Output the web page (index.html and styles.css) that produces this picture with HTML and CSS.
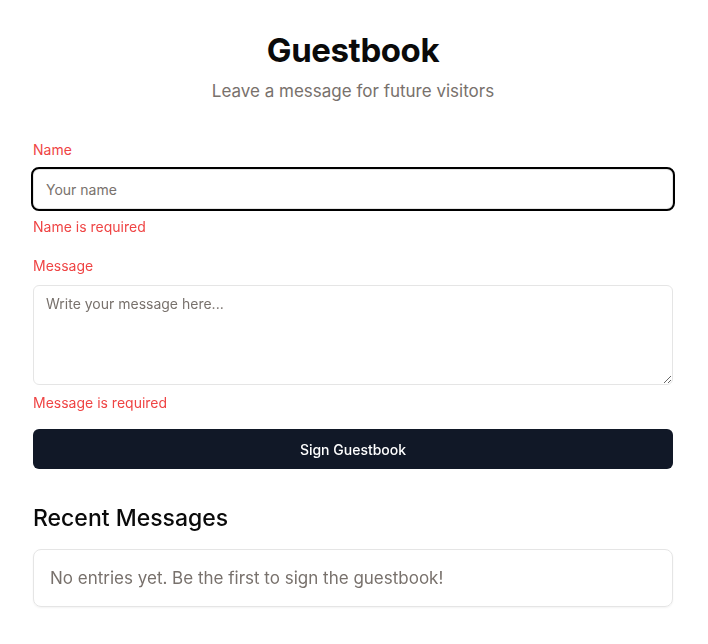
FILE: index.html
```html
<!DOCTYPE html>
<html lang="en">
<head>
<meta charset="utf-8">
<title>Guestbook</title>
<link rel="stylesheet" href="styles.css">
</head>
<body>
<main class="page">
  <header class="header">
    <h1 class="title">Guestbook</h1>
    <p class="subtitle">Leave a message for future visitors</p>
  </header>
  <form class="form">
    <div class="field">
      <label class="label" for="name">Name</label>
      <input class="input input-focus" id="name" type="text" placeholder="Your name">
      <p class="error">Name is required</p>
    </div>
    <div class="field">
      <label class="label" for="message">Message</label>
      <textarea class="input textarea" id="message" placeholder="Write your message here..."></textarea>
      <p class="error">Message is required</p>
    </div>
    <button class="button" type="button">Sign Guestbook</button>
  </form>
  <section class="recent">
    <h2 class="recent-title">Recent Messages</h2>
    <div class="card">No entries yet. Be the first to sign the guestbook!</div>
  </section>
</main>
<script>document.getElementById('name').focus();</script>
</body>
</html>
```

FILE: styles.css
```css
* { box-sizing: border-box; }
html, body { margin: 0; padding: 0; background: #fff; }
body {
  font-family: Inter, "Noto Sans", "Liberation Sans", sans-serif;
  color: #0a0a0a;
  padding-right: 2px;
}
.page {
  max-width: 640px;
  margin: 0 auto;
  padding: 32px 0 32px;
}
.header { text-align: center; }
.title {
  margin: 0;
  font-size: 33px;
  line-height: 36px;
  font-weight: 700;
  letter-spacing: -0.4px;
  color: #0a0a0a;
}
.subtitle {
  margin: 11px 0 0;
  font-size: 17px;
  line-height: 24px;
  color: #78716c;
}
.form { margin-top: 37px; display: flex; flex-direction: column; }
.field { display: flex; flex-direction: column; margin-bottom: 19px; }
.label {
  font-size: 14px;
  line-height: 20px;
  font-weight: 400;
  color: #ef4444;
  margin-bottom: 9px;
}
.input {
  width: 100%;
  height: 40px;
  border: 1px solid #e5e5e5;
  border-radius: 6px;
  padding: 8px 12px;
  font-family: inherit;
  font-size: 14px;
  line-height: 20px;
  color: #0a0a0a;
  background: #fff;
  outline: none;
}
.input::placeholder { color: #78716c; }
.input-focus:focus { outline: 2px solid #000; outline-offset: 0; }
.textarea { height: 100px; resize: vertical; display: block; }
.error {
  margin: 8px 0 0;
  font-size: 14px;
  line-height: 20px;
  color: #ef4444;
}
.field + .button { margin-top: -3px; }
.button {
  height: 40px;
  border: none;
  border-radius: 6px;
  background: #111827;
  color: #fff;
  font-family: inherit;
  font-size: 14px;
  font-weight: 500;
  cursor: pointer;
}
.recent { margin-top: 35px; }
.recent-title {
  margin: 0 0 17px;
  font-size: 23px;
  line-height: 28px;
  font-weight: 500;
  color: #0a0a0a;
}
.card {
  border: 1px solid #e5e5e5;
  border-radius: 8px;
  padding: 16px;
  font-size: 17px;
  line-height: 24px;
  color: #78716c;
  box-shadow: 0 1px 2px rgba(0,0,0,0.05);
}
```
